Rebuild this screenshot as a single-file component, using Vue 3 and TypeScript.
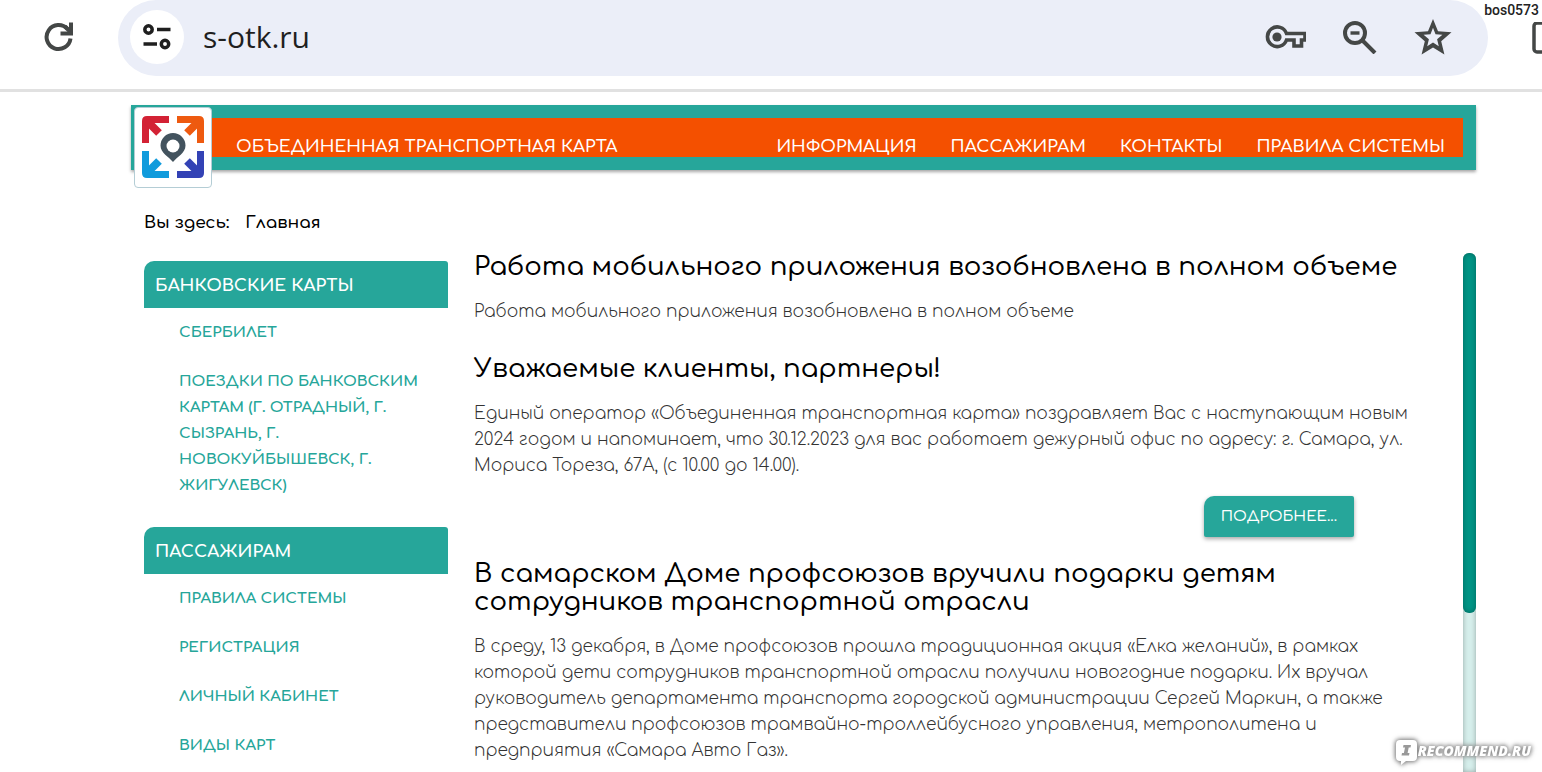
<script setup lang="ts">
interface MenuGroup {
  title: string
  items: string[]
}

interface Article {
  title: string
  text: string
  more?: boolean
}

const navigation: string[] = ['Информация', 'Пассажирам', 'Контакты', 'Правила системы']

const groups: MenuGroup[] = [
  {
    title: 'Банковские карты',
    items: [
      'Сбербилет',
      'Поездки по банковским картам (г. Отрадный, г. Сызрань, г. Новокуйбышевск, г. Жигулевск)',
    ],
  },
  {
    title: 'Пассажирам',
    items: ['Правила системы', 'Регистрация', 'Личный кабинет', 'Виды карт'],
  },
]

const articles: Article[] = [
  {
    title: 'Работа мобильного приложения возобновлена в полном объеме',
    text: 'Работа мобильного приложения возобновлена в полном объеме',
  },
  {
    title: 'Уважаемые клиенты, партнеры!',
    text: 'Единый оператор «Объединенная транспортная карта» поздравляет Вас с наступающим новым 2024 годом и напоминает, что 30.12.2023 для вас работает дежурный офис по адресу: г. Самара, ул. Мориса Тореза, 67А, (с 10.00 до 14.00).',
    more: true,
  },
  {
    title: 'В самарском Доме профсоюзов вручили подарки детям сотрудников транспортной отрасли',
    text: 'В среду, 13 декабря, в Доме профсоюзов прошла традиционная акция «Елка желаний», в рамках которой дети сотрудников транспортной отрасли получили новогодние подарки. Их вручал руководитель департамента транспорта городской администрации Сергей Маркин, а также представители профсоюзов трамвайно-троллейбусного управления, метрополитена и предприятия «Самара Авто Газ».',
  },
]
</script>

<template>
  <div class="screen">
    <div class="toolbar">
      <button class="icon-button" type="button" aria-label="Обновить">
        <svg width="30" height="30" viewBox="0 0 30 30" fill="none" stroke="#444746" stroke-width="4">
          <path d="M26.5 16.5A12 12 0 1 1 23.5 7" />
          <path d="M27 0.5V11.5H16.5" />
          <path d="M21 4.500l5 5" />
        </svg>
      </button>
      <div class="omnibox">
        <button class="site-info" type="button" aria-label="Сведения о сайте">
          <svg width="28" height="26" viewBox="0 0 28 26" fill="none" stroke="#1f1f1f" stroke-width="3.500">
            <circle cx="5.500" cy="5.500" r="3.700" />
            <path d="M14 5.500H27.500M0.500 20H14" />
            <circle cx="22" cy="20" r="3.700" />
          </svg>
        </button>
        <input class="address" type="text" aria-label="Адрес" value="s-otk.ru" />
        <div class="actions">
          <button class="icon-button" type="button" aria-label="Пароли">
            <svg width="42" height="24" viewBox="0 0 42 24" fill="none" stroke="#444746" stroke-width="3.600">
              <path d="M22.500 8.500H41V15H37.500V21H30V15H22.500A9.800 9.800 0 1 1 22.500 8.500Z" />
              <circle cx="13" cy="12" r="4.600" fill="#444746" stroke="none" />
            </svg>
          </button>
          <button class="icon-button" type="button" aria-label="Масштаб">
            <svg width="34" height="34" viewBox="0 0 34 34" fill="none" stroke="#444746" stroke-width="4">
              <circle cx="12" cy="13" r="10" />
              <path d="M19 20L32 33" />
              <path d="M7.500 13H16.500" stroke-width="3.400" />
            </svg>
          </button>
          <button class="icon-button" type="button" aria-label="Добавить в закладки">
            <svg width="38" height="36" viewBox="0 0 38 36" fill="#444746" fill-rule="evenodd">
              <path d="M19 0L24 12.200L37.500 13.300L27.200 22.200L30.400 35.500L19 28.400L7.600 35.500L10.800 22.200L0.500 13.300L14 12.200ZM19 8.800L16.500 15.200L9.600 15.800L14.900 20.300L13.200 27.200L19 23.600L24.800 27.200L23.100 20.300L28.400 15.800L21.500 15.200Z" />
            </svg>
          </button>
        </div>
      </div>
      <button class="icon-button side" type="button" aria-label="Боковая панель">
        <svg width="34" height="34" viewBox="0 0 34 34" fill="none" stroke="#444746" stroke-width="3.500">
          <rect x="2" y="1" width="30" height="29" rx="3" />
        </svg>
      </button>
    </div>

    <div class="page">
      <header class="header">
        <a class="logo" href="#" aria-label="Главная">
          <svg width="62" height="62" viewBox="0 0 62 62">
            <g fill="#d32235" stroke="#d32235">
              <path d="M27 0V7H7V27H0V5Q0 0 5 0Z" stroke="none" />
              <path d="M5 5L17 17" stroke-width="8" />
            </g>
            <g fill="#ee5a10" stroke="#ee5a10">
              <path d="M35 0V7H55V27H62V5Q62 0 57 0Z" stroke="none" />
              <path d="M57 5L45 17" stroke-width="8" />
            </g>
            <g fill="#119bdc" stroke="#119bdc">
              <path d="M27 62V55H7V35H0V57Q0 62 5 62Z" stroke="none" />
              <path d="M5 57L17 45" stroke-width="8" />
            </g>
            <g fill="#3342b5" stroke="#3342b5">
              <path d="M35 62V55H55V35H62V57Q62 62 57 62Z" stroke="none" />
              <path d="M57 57L45 45" stroke-width="8" />
            </g>
            <path d="M31 46C27 41 18.500 37 18.500 29.500A12.500 12.500 0 0 1 43.500 29.500C43.500 37 35 41 31 46Z" fill="#43535e" />
            <circle cx="31" cy="30" r="6.500" fill="#fff" />
          </svg>
        </a>
        <div class="header-band">
          <a class="brand" href="#">Объединенная транспортная карта</a>
          <nav class="nav">
            <a v-for="item in navigation" :key="item" href="#">{{ item }}</a>
          </nav>
        </div>
      </header>

      <div class="breadcrumbs"><span>Вы здесь:</span><span>Главная</span></div>

      <div class="columns">
        <aside class="sidebar">
          <section v-for="group in groups" :key="group.title" class="group">
            <h3>{{ group.title }}</h3>
            <ul>
              <li v-for="item in group.items" :key="item"><a href="#">{{ item }}</a></li>
            </ul>
          </section>
        </aside>
        <main class="feed">
          <article v-for="article in articles" :key="article.title">
            <h2>{{ article.title }}</h2>
            <p>{{ article.text }}</p>
            <div v-if="article.more" class="more-row">
              <a class="more" href="#">Подробнее...</a>
            </div>
          </article>
        </main>
        <div class="track"><div class="thumb"></div></div>
      </div>
    </div>

    <span class="user">bos0573</span>
    <div class="watermark">
      <svg width="22" height="26" viewBox="0 0 22 26">
        <path d="M4 0H17Q21 0 21 4V17Q21 21 17 21H10L5 25V21H4Q0 21 0 17V4Q0 0 4 0Z" fill="#fff" />
        <path d="M7.500 5H15L14.500 7.500H12.700L11.600 13H13.500L13 15.500H5.500L6 13H7.900L9 7.500H7Z" fill="#999" />
      </svg>
      <span>RECOMMEND.RU</span>
    </div>
  </div>
</template>

<style>
body {
  margin: 0;
  background: #fff;
}
</style>

<style scoped>
* {
  box-sizing: border-box;
}

.screen {
  position: relative;
  display: flex;
  flex-direction: column;
  height: 100vh;
  overflow: hidden;
  font-family: Comfortaa, Inter, "Noto Sans", sans-serif;
  color: #000;
}

a {
  color: inherit;
  text-decoration: none;
}

button {
  padding: 0;
  border: 0;
  background: none;
}

svg {
  display: block;
}

.toolbar {
  display: flex;
  flex: none;
  align-items: flex-start;
  gap: 44px;
  height: 92px;
  padding-left: 44px;
  border-bottom: 3px solid #e1e1e1;
}

.toolbar > .icon-button {
  flex: none;
  margin-top: 22px;
}

.toolbar > .side {
  width: 10px;
  overflow: hidden;
}

.omnibox {
  display: flex;
  flex: 1;
  align-items: center;
  height: 76px;
  padding: 0 36px 2px 12px;
  border-radius: 38px;
  background: #ebeef8;
}

.site-info {
  display: flex;
  align-items: center;
  justify-content: center;
  width: 54px;
  height: 54px;
  border-radius: 50%;
  background: #fff;
}

.address {
  flex: 1;
  min-width: 0;
  margin-left: 19px;
  padding: 0 0 2px;
  border: 0;
  outline: 0;
  background: none;
  font: 30px "Open Sans", "Noto Sans", sans-serif;
  color: #1f1f1f;
}

.actions {
  display: flex;
  align-items: center;
  gap: 37px;
}

.page {
  display: flex;
  flex: 1;
  flex-direction: column;
  min-height: 0;
  padding: 13px 66px 0 131px;
}

.header {
  position: relative;
  padding: 13px;
  background: #26a69a;
  box-shadow: 0 2px 3px rgba(0, 0, 0, 0.35);
}

.logo {
  position: absolute;
  top: 2px;
  left: 3px;
  padding: 8px 7px 9px;
  border: 1px solid #b4cdd5;
  border-radius: 4px;
  background: #fff;
}

.header-band {
  display: flex;
  align-items: flex-end;
  justify-content: space-between;
  height: 39px;
  padding: 0 18px 0 92px;
  background: #f45000;
  font-size: 17px;
  font-weight: 600;
  line-height: 20px;
  text-transform: uppercase;
  color: #fff;
}

.nav {
  display: flex;
  gap: 34px;
}

.breadcrumbs {
  display: flex;
  gap: 16px;
  padding: 41px 13px 0;
  font-size: 17px;
  font-weight: 600;
  line-height: 24px;
}

.columns {
  display: flex;
  flex: 1;
  min-height: 0;
  margin-top: 18px;
  padding-left: 13px;
}

.sidebar {
  flex: none;
  width: 304px;
  padding-top: 8px;
}

.group {
  margin-bottom: 17px;
}

.group h3 {
  margin: 0;
  padding: 2px 11px 0;
  border-radius: 10px 3px 0 0;
  background: #26a69a;
  font-size: 17px;
  font-weight: 700;
  line-height: 45px;
  text-transform: uppercase;
  color: #fff;
}

.group ul {
  margin: 0;
  padding: 0 24px 0 35px;
  list-style: none;
}

.group li {
  padding: 12px 0 11px;
  font-size: 15px;
  font-weight: 700;
  line-height: 26px;
  text-transform: uppercase;
  color: #26a69a;
}

.feed {
  flex: 1;
  min-width: 0;
  padding: 0 36px 0 26px;
  overflow: hidden;
}

article {
  margin-bottom: 30px;
}

h2 {
  margin: 0 0 18px;
  font-size: 26px;
  font-weight: 500;
  line-height: 28px;
}

p {
  margin: 0;
  font-size: 17px;
  font-weight: 300;
  line-height: 26px;
  color: #333;
}

.more-row {
  display: flex;
  justify-content: flex-end;
  margin: 17px 73px -7px 0;
}

.more {
  padding: 0 17px;
  border-radius: 10px 2px 2px 2px;
  background: #26a69a;
  box-shadow: 0 2px 4px rgba(0, 0, 0, 0.35);
  font-size: 15px;
  font-weight: 500;
  line-height: 41px;
  text-transform: uppercase;
  color: #fff;
}

.track {
  flex: none;
  width: 13px;
  border-radius: 6px 6px 0 0;
  background: #d5eeeb;
  box-shadow: inset 0 0 5px rgba(0, 0, 0, 0.3);
}

.thumb {
  height: 360px;
  border-radius: 6px;
  background: #009485;
  box-shadow: inset 0 0 5px rgba(0, 0, 0, 0.3);
}

.user {
  position: absolute;
  top: 1px;
  right: 3px;
  font: 500 14px/18px Roboto, sans-serif;
  color: #222;
}

.watermark {
  position: absolute;
  right: 11px;
  bottom: 6px;
  display: flex;
  align-items: flex-start;
  filter: drop-shadow(0 0 2px #888) drop-shadow(0 0 2px #999);
  font: italic 800 14px/22px "Open Sans", sans-serif;
  color: #fff;
}
</style>
